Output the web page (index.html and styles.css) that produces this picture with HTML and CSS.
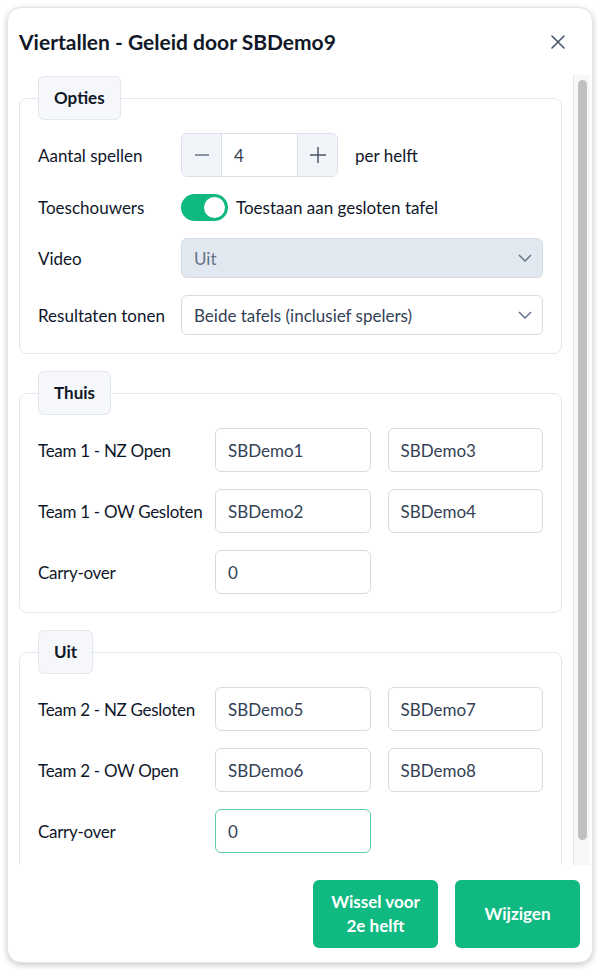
FILE: index.html
```html
<!DOCTYPE html>
<html lang="nl">
<head>
    <meta charset="UTF-8">
    <meta name="viewport" content="width=device-width, initial-scale=1.0">
    <title>Viertallen</title>
    <link rel="stylesheet" href="styles.css">
</head>
<body>
    <div class="modal">
        <header class="modal-header">
            <h2>Viertallen - Geleid door SBDemo9</h2>
            <button class="close-btn" aria-label="Sluiten">
                <svg width="14" height="14" viewBox="0 0 14 14"><path d="M1 1L13 13M13 1L1 13" stroke="#475569" stroke-width="1.6" stroke-linecap="round"/></svg>
            </button>
        </header>

        <div class="body-wrap">
            <div class="modal-body">
                <fieldset class="group">
                    <legend>Opties</legend>
                    <div class="options-grid">
                        <label>Aantal spellen</label>
                        <div class="row-inline">
                            <div class="stepper">
                                <button class="step-btn">
                                    <svg width="16" height="16" viewBox="0 0 16 16"><path d="M1 8H15" stroke="#64748b" stroke-width="1.5"/></svg>
                                </button>
                                <input type="text" value="4">
                                <button class="step-btn">
                                    <svg width="18" height="18" viewBox="0 0 18 18"><path d="M1 9H17M9 1V17" stroke="#475569" stroke-width="1.5"/></svg>
                                </button>
                            </div>
                            <span>per helft</span>
                        </div>

                        <label>Toeschouwers</label>
                        <div class="row-inline toggle-row">
                            <span class="toggle"><span class="knob"></span></span>
                            <span>Toestaan aan gesloten tafel</span>
                        </div>

                        <label>Video</label>
                        <div class="select disabled">
                            <span>Uit</span>
                            <svg width="14" height="8" viewBox="0 0 14 8"><path d="M1 1L7 7L13 1" fill="none" stroke="#64748b" stroke-width="1.5"/></svg>
                        </div>

                        <label>Resultaten tonen</label>
                        <div class="select">
                            <span>Beide tafels (inclusief spelers)</span>
                            <svg width="14" height="8" viewBox="0 0 14 8"><path d="M1 1L7 7L13 1" fill="none" stroke="#64748b" stroke-width="1.5"/></svg>
                        </div>
                    </div>
                </fieldset>

                <fieldset class="group">
                    <legend>Thuis</legend>
                    <div class="team-grid">
                        <label>Team 1 - NZ Open</label>
                        <input type="text" value="SBDemo1">
                        <input type="text" value="SBDemo3">

                        <label>Team 1 - OW Gesloten</label>
                        <input type="text" value="SBDemo2">
                        <input type="text" value="SBDemo4">

                        <label>Carry-over</label>
                        <input type="text" value="0">
                    </div>
                </fieldset>

                <fieldset class="group">
                    <legend>Uit</legend>
                    <div class="team-grid">
                        <label>Team 2 - NZ Gesloten</label>
                        <input type="text" value="SBDemo5">
                        <input type="text" value="SBDemo7">

                        <label>Team 2 - OW Open</label>
                        <input type="text" value="SBDemo6">
                        <input type="text" value="SBDemo8">

                        <label>Carry-over</label>
                        <input type="text" value="0" class="focused">
                    </div>
                </fieldset>
            </div>
            <div class="scrollbar"><div class="thumb"></div></div>
        </div>

        <footer class="modal-footer">
            <button class="btn">Wissel voor<br>2e helft</button>
            <button class="btn">Wijzigen</button>
        </footer>
    </div>
</body>
</html>
```

FILE: styles.css
```css
body {
    margin: 0;
    padding: 0;
    background: #ffffff;
    font-family: Lato, "Open Sans", sans-serif;
    color: #0f172a;
}

.modal {
    margin: 7px;
    width: 586px;
    height: 956px;
    box-sizing: border-box;
    border: 1px solid #e2e6eb;
    border-radius: 14px;
    box-shadow: 0 2px 6px rgba(0, 0, 0, 0.22);
    background: #fff;
    display: flex;
    flex-direction: column;
    overflow: hidden;
}

.modal-header {
    height: 67px;
    flex: none;
    display: flex;
    align-items: center;
    justify-content: space-between;
    padding: 0 22px 0 11px;
}

.modal-header h2 {
    margin: 0;
    font-size: 21px;
    font-weight: 700;
    color: #111827;
}

.close-btn {
    background: none;
    border: none;
    padding: 0;
    width: 24px;
    height: 24px;
    display: flex;
    align-items: center;
    justify-content: center;
    cursor: pointer;
}

.body-wrap {
    height: 790px;
    flex: none;
    display: flex;
    margin-right: 2px;
}

.modal-body {
    flex: 1;
    overflow: hidden;
    padding: 1px 11px 0 11px;
}

.scrollbar {
    width: 17px;
    flex: none;
    box-sizing: border-box;
    background: #f7f7f7;
    border-left: 1px solid #e6e6e6;
    padding: 5px 3px 0 4px;
}

.thumb {
    height: 760px;
    border-radius: 5px;
    background: #c1c1c1;
}

.group {
    margin: 0 0 17px;
    border: 1px solid #e2e8f0;
    border-radius: 8px;
    padding: 13px 18px 18px;
}

.group legend {
    height: 44px;
    box-sizing: border-box;
    line-height: 42px;
    padding: 0 15px;
    border: 1px solid #e2e8f0;
    border-radius: 6px;
    background: #f5f7fa;
    font-size: 17px;
    font-weight: 700;
    color: #111827;
}

label {
    font-size: 17px;
    color: #0f172a;
    white-space: nowrap;
}

.options-grid {
    display: grid;
    grid-template-columns: 127px 1fr;
    column-gap: 16px;
    row-gap: 17px;
    align-items: center;
}

.row-inline {
    display: flex;
    align-items: center;
    gap: 17px;
    font-size: 17px;
}

.toggle-row {
    gap: 8px;
    height: 27px;
}

.stepper {
    display: flex;
    height: 44px;
    border: 1px solid #d9e0e8;
    border-radius: 6px;
    overflow: hidden;
    box-sizing: border-box;
}

.step-btn {
    width: 39px;
    border: none;
    background: #f1f5f9;
    display: flex;
    align-items: center;
    justify-content: center;
    padding: 0;
}

.stepper input {
    width: 77px;
    border: none;
    border-left: 1px solid #d9e0e8;
    border-right: 1px solid #d9e0e8;
    border-radius: 0;
    height: 42px;
}

.toggle {
    width: 47px;
    height: 27px;
    border-radius: 14px;
    background: #10b981;
    display: flex;
    align-items: center;
    justify-content: flex-end;
    padding: 0 3px;
    box-sizing: border-box;
}

.knob {
    width: 21px;
    height: 21px;
    border-radius: 50%;
    background: #fff;
}

.select {
    height: 40px;
    box-sizing: border-box;
    border: 1px solid #d5dce5;
    border-radius: 6px;
    display: flex;
    align-items: center;
    justify-content: space-between;
    padding: 0 10px 0 12px;
    font-size: 17px;
    color: #334155;
    background: #fff;
}

.select.disabled {
    background: #e2e8f0;
    color: #64748b;
}

.team-grid {
    display: grid;
    grid-template-columns: 160px 1fr 1fr;
    column-gap: 17px;
    row-gap: 17px;
    align-items: center;
}

.team-grid label {
    grid-column: 1;
    letter-spacing: -0.3px;
}

input {
    height: 44px;
    box-sizing: border-box;
    border: 1px solid #d5dce5;
    border-radius: 6px;
    padding: 0 12px;
    font-family: Lato, "Open Sans", sans-serif;
    font-size: 17px;
    color: #334155;
    background: #fff;
    width: 100%;
    min-width: 0;
    outline: none;
}

input.focused {
    border-color: #5ccf9d;
}

.modal-footer {
    flex: 1;
    display: flex;
    justify-content: flex-end;
    align-items: flex-start;
    gap: 17px;
    padding: 15px 12px 0;
}

.btn {
    width: 125px;
    height: 68px;
    border: none;
    border-radius: 6px;
    background: #10b981;
    color: #fff;
    font-family: Lato, "Open Sans", sans-serif;
    font-size: 17px;
    font-weight: 700;
    line-height: 24px;
    cursor: pointer;
}
```
